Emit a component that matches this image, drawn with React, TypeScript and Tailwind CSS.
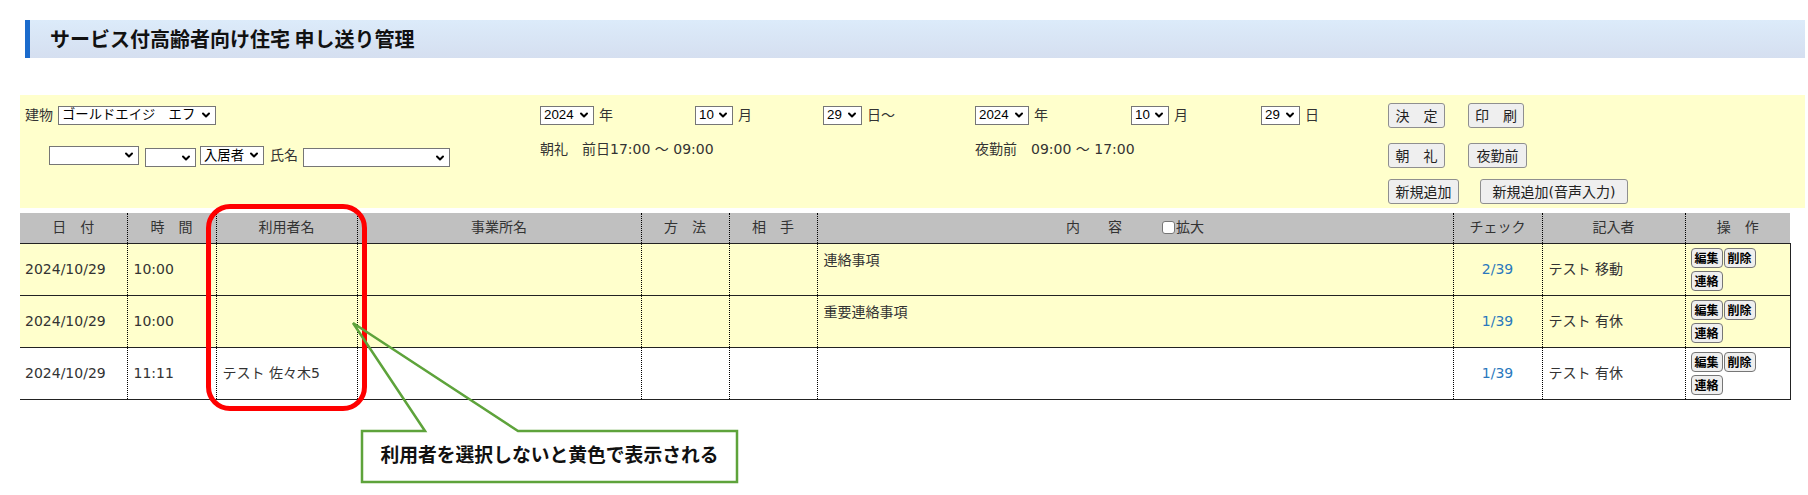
import { ChevronDown } from "lucide-react";

type Row = {
  date: string;
  time: string;
  user: string;
  content: string;
  check: string;
  writer: string;
  yellow: boolean;
};

const ROWS: Row[] = [
  { date: "2024/10/29", time: "10:00", user: "", content: "連絡事項", check: "2/39", writer: "テスト 移動", yellow: true },
  { date: "2024/10/29", time: "10:00", user: "", content: "重要連絡事項", check: "1/39", writer: "テスト 有休", yellow: true },
  { date: "2024/10/29", time: "11:11", user: "テスト 佐々木5", content: "", check: "1/39", writer: "テスト 有休", yellow: false },
];

const COLS = [
  "w-[107px]",
  "w-[89px]",
  "w-[141px]",
  "w-[284px]",
  "w-[88px]",
  "w-[88px]",
  "w-[636px]",
  "w-[89px]",
  "w-[143px]",
  "w-[105px]",
];

function Select({ width, label }: { width: string; label?: string }) {
  return (
    <span
      className={`inline-flex h-[19px] items-center justify-between border border-[#767676] bg-white pl-[3px] pr-[3px] font-['Liberation_Sans','Noto_Sans_CJK_JP',sans-serif] text-[13.33px] leading-none text-black ${width}`}
    >
      <span className="whitespace-pre">{label ?? ""}</span>
      <ChevronDown size={12} strokeWidth={4} className="shrink-0" />
    </span>
  );
}

function Btn({ width, label }: { width: string; label: string }) {
  return (
    <button
      className={`flex h-[25px] items-center justify-center rounded-[3px] border border-[#8f8f8f] bg-[#efefef] text-[14px] leading-none text-[#222] ${width}`}
    >
      {label}
    </button>
  );
}

function MiniBtn({ label }: { label: string }) {
  return (
    <button className="flex h-[20px] w-[32px] items-center justify-center rounded-[4px] border border-[#767676] bg-[#efefef] text-[12px] font-bold leading-none text-black">
      {label}
    </button>
  );
}

function FilterPanel() {
  return (
    <div className="mr-[3px] ml-[20px] mt-[37px] flex h-[113px] bg-[#ffffcc] text-[14px] text-[#333]">
      <div className="w-[520px] pl-[5px]">
        <div className="mt-[8px] flex h-[24px] items-center gap-[5px]">
          <span>建物</span>
          <Select width="w-[158px]" label="ゴールドエイジ　エフ" />
        </div>
        <div className="mt-[16px] flex h-[24px] items-center pl-[24px]">
          <Select width="w-[90px]" />
          <span className="ml-[6px]">
            <Select width="w-[51px]" />
          </span>
          <span className="ml-[4px]">
            <Select width="w-[64px]" label="入居者" />
          </span>
          <span className="ml-[6px]">氏名</span>
          <span className="ml-[5px]">
            <Select width="w-[147px]" />
          </span>
        </div>
      </div>

      <div className="w-[435px]">
        <div className="mt-[8px] flex h-[24px] items-center">
          <div className="flex w-[155px] items-center gap-[5px]">
            <Select width="w-[54px]" label="2024" />
            <span>年</span>
          </div>
          <div className="flex w-[128px] items-center gap-[5px]">
            <Select width="w-[38px]" label="10" />
            <span>月</span>
          </div>
          <div className="flex items-center gap-[5px]">
            <Select width="w-[39px]" label="29" />
            <span>日～</span>
          </div>
        </div>
        <div className="mt-[10px] flex h-[24px] items-center whitespace-pre">朝礼　前日17:00 ～ 09:00</div>
      </div>

      <div className="w-[413px]">
        <div className="mt-[8px] flex h-[24px] items-center">
          <div className="flex w-[156px] items-center gap-[5px]">
            <Select width="w-[54px]" label="2024" />
            <span>年</span>
          </div>
          <div className="flex w-[130px] items-center gap-[5px]">
            <Select width="w-[38px]" label="10" />
            <span>月</span>
          </div>
          <div className="flex items-center gap-[5px]">
            <Select width="w-[39px]" label="29" />
            <span>日</span>
          </div>
        </div>
        <div className="mt-[10px] flex h-[24px] items-center whitespace-pre">夜勤前　09:00 ～ 17:00</div>
      </div>

      <div className="flex flex-col">
        <div className="mt-[8px] flex gap-[23px]">
          <Btn width="w-[57px]" label="決　定" />
          <Btn width="w-[56px]" label="印　刷" />
        </div>
        <div className="mt-[15px] flex gap-[23px]">
          <Btn width="w-[57px]" label="朝　礼" />
          <Btn width="w-[59px]" label="夜勤前" />
        </div>
        <div className="mt-[11px] flex gap-[21px]">
          <Btn width="w-[71px]" label="新規追加" />
          <Btn width="w-[148px]" label="新規追加(音声入力)" />
        </div>
      </div>
    </div>
  );
}

function HandoverTable() {
  const headers = ["日　付", "時　間", "利用者名", "事業所名", "方　法", "相　手", null, "チェック", "記入者", "操　作"];

  return (
    <table className="ml-[20px] mt-[5px] w-[1770px] table-fixed border-collapse text-[14px] text-[#333]">
      <colgroup>
        {COLS.map((w, i) => (
          <col key={i} className={w} />
        ))}
      </colgroup>
      <thead>
        <tr className="h-[30px] bg-[#c0c0c0]">
          {headers.map((h, i) => (
            <th
              key={i}
              className={`border-b border-[#222] text-center font-normal text-[#333] ${
                i > 0 ? "border-l border-dotted border-l-black" : ""
              }`}
              style={{ borderBottomStyle: "solid" }}
            >
              {h ?? (
                <span className="inline-flex items-center">
                  <span className="whitespace-pre">内　　容</span>
                  <span className="ml-[40px] inline-block h-[13px] w-[13px] rounded-[3px] border border-[#767676] bg-white" />
                  <span className="ml-[1px]">拡大</span>
                </span>
              )}
            </th>
          ))}
        </tr>
      </thead>
      <tbody className="font-['DejaVu_Sans','Noto_Sans_CJK_JP',sans-serif]">
        {ROWS.map((r, idx) => (
          <tr key={idx} className={`h-[52px] border-b border-[#222] ${r.yellow ? "bg-[#ffffcc]" : "bg-white"}`}>
            <td className="pl-[5px]">{r.date}</td>
            <td className="border-l border-dotted border-l-black pl-[6px]">{r.time}</td>
            <td className="border-l border-dotted border-l-black pl-[6px]">{r.user}</td>
            <td className="border-l border-dotted border-l-black" />
            <td className="border-l border-dotted border-l-black" />
            <td className="border-l border-dotted border-l-black" />
            <td className="border-l border-dotted border-l-black pl-[6px] pt-[6px] align-top">{r.content}</td>
            <td className="border-l border-dotted border-l-black text-center text-[#2a78bd]">{r.check}</td>
            <td className="border-l border-dotted border-l-black pl-[6px]">{r.writer}</td>
            <td
              className="border-l border-r border-dotted border-l-black border-r-[#222] pl-[5px] pt-[4px] align-top font-['Noto_Sans_CJK_JP',sans-serif]"
              style={{ borderRightStyle: "solid" }}
            >
              <div className="flex gap-[1px]">
                <MiniBtn label="編集" />
                <MiniBtn label="削除" />
              </div>
              <div className="mt-[3px]">
                <MiniBtn label="連絡" />
              </div>
            </td>
          </tr>
        ))}
      </tbody>
    </table>
  );
}

function Annotations() {
  return (
    <>
      <div className="pointer-events-none absolute left-[206px] top-[204px] h-[207px] w-[161px] rounded-[24px] border-[5px] border-[#ff0000]" />
      <svg className="pointer-events-none absolute left-0 top-0" width="1808" height="495">
        <rect x="362" y="431" width="375" height="51" fill="white" />
        <path
          d="M425 431 L353 323 L518 431 L737 431 L737 482 L362 482 L362 431 Z"
          fill="none"
          stroke="#5ea33b"
          strokeWidth="2.5"
        />
      </svg>
      <div className="absolute left-[362px] top-[431px] flex h-[51px] w-[375px] items-center justify-center text-[18.8px] font-bold text-[#111]">
        利用者を選択しないと黄色で表示される
      </div>
    </>
  );
}

export default function App() {
  return (
    <div className="relative h-[495px] w-[1808px] overflow-hidden bg-white font-['DejaVu_Sans','Noto_Sans_CJK_JP',sans-serif]">
      <div className="mr-[3px] ml-[25px] mt-[20px] flex h-[38px] items-center border-l-[5px] border-[#1b6bcc] bg-gradient-to-b from-[#dcebfa] to-[#d5dff0] pl-[20px]">
        <h1 className="font-['Noto_Sans_CJK_JP',sans-serif] text-[20px] font-bold text-[#111]">サービス付高齢者向け住宅 申し送り管理</h1>
      </div>
      <FilterPanel />
      <HandoverTable />
      <Annotations />
    </div>
  );
}
